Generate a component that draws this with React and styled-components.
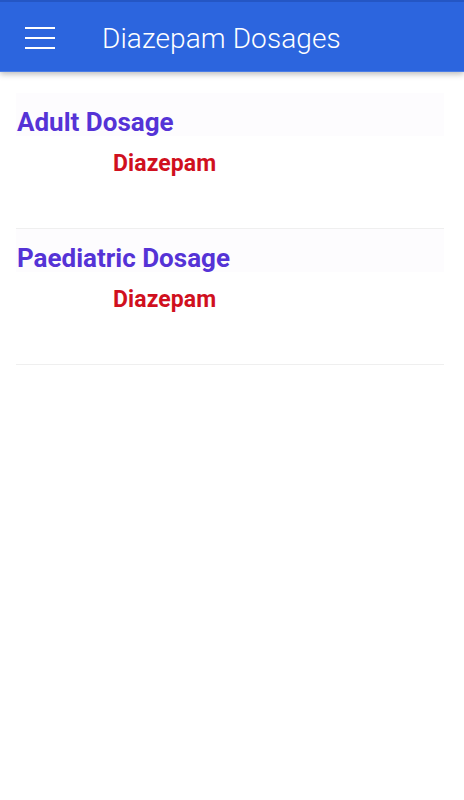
import React from "react";
import styled, { createGlobalStyle } from "styled-components";

const GlobalStyle = createGlobalStyle`
    html, body {
        margin: 0;
        padding: 0;
        background: #ffffff;
        font-family: Roboto, "Liberation Sans", sans-serif;
    }
`

const Page = styled.div`
    width: 464px;
    min-height: 800px;
    background: #ffffff;
`

const Toolbar = styled.header`
    height: 72px;
    background: #2c65de;
    border-top: 2px solid #2456c4;
    border-bottom: 1px solid #4a7de6;
    box-sizing: border-box;
    display: flex;
    align-items: center;
    box-shadow: 0 2px 6px rgba(0, 0, 0, 0.28);
    position: relative;
`

const MenuButton = styled.button`
    width: 30px;
    height: 22px;
    margin: 2px 0 0 25px;
    padding: 0;
    border: none;
    background: transparent;
    display: flex;
    flex-direction: column;
    justify-content: space-between;
`

const MenuLine = styled.span`
    display: block;
    height: 2px;
    width: 30px;
    background: #ffffff;
`

const Title = styled.h1`
    margin: 3px 0 0 47px;
    color: #ffffff;
    font-weight: 300;
    font-size: 28px;
    letter-spacing: 0.1px;
`

const Content = styled.main`
    padding: 21px 20px 0 16px;
`

const Section = styled.section`
    border-bottom: 1px solid #efefef;
    height: 136px;
    box-sizing: border-box;
`

const Heading = styled.h2`
    margin: 0;
    height: 43px;
    padding-left: 1px;
    background: #fdfcfe;
    color: #5533d6;
    font-size: 26px;
    font-weight: 700;
    display: flex;
    align-items: flex-end;
    line-height: 1;
`

const HeadingText = styled.span`
    transform: translateY(-1px);
`

const Drug = styled.div`
    margin-left: 97px;
    margin-top: 14px;
    color: #d0101e;
    font-size: 23px;
    font-weight: 700;
    letter-spacing: 0.1px;
`

const sections = [
    { title: "Adult Dosage", drug: "Diazepam" },
    { title: "Paediatric Dosage", drug: "Diazepam" },
]

const App = () => {
    return (
        <Page>
            <GlobalStyle />
            <Toolbar>
                <MenuButton aria-label="menu">
                    <MenuLine />
                    <MenuLine />
                    <MenuLine />
                </MenuButton>
                <Title>Diazepam Dosages</Title>
            </Toolbar>
            <Content>
                {sections.map((s) => (
                    <Section key={s.title}>
                        <Heading><HeadingText>{s.title}</HeadingText></Heading>
                        <Drug>{s.drug}</Drug>
                    </Section>
                ))}
            </Content>
        </Page>
    )
}

export default App
